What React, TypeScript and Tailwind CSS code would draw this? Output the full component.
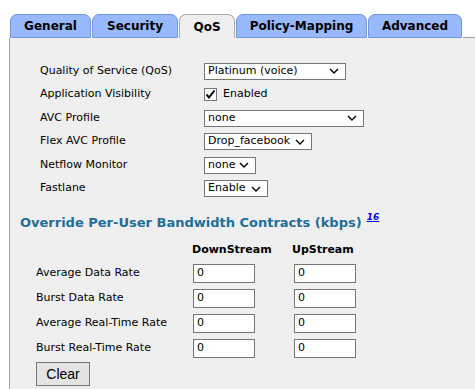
import React from 'react';

const tabs = [
    { name: 'General', w: 'w-[81px]', active: false },
    { name: 'Security', w: 'w-[86px]', active: false },
    { name: 'QoS', w: 'w-[56px]', active: true },
    { name: 'Policy-Mapping', w: 'w-[131px]', active: false },
    { name: 'Advanced', w: 'w-[94px]', active: false },
];

const Chevron = () => (
    <svg className="absolute right-[6px] top-1/2 -translate-y-1/2" width="10" height="6" viewBox="0 0 10 6">
        <path d="M1 1 L5 5 L9 1" fill="none" stroke="#000" strokeWidth="1.4" />
    </svg>
);

const Select: React.FC<{ value: string; w: string }> = ({ value, w }) => (
    <div className={`relative flex items-center h-[17px] bg-white border border-[#767676] pl-[3px] text-black ${w}`}>
        <span>{value}</span>
        <Chevron />
    </div>
);

const Field: React.FC = () => (
    <div className="flex items-center h-[19px] w-[62px] bg-white border border-[#767676] pl-[3px] text-black">0</div>
);

const rows: { label: string; h: string; control: React.ReactNode }[] = [
    { label: 'Quality of Service (QoS)', h: 'h-[24px]', control: <Select value="Platinum (voice)" w="w-[142px]" /> },
    {
        label: 'Application Visibility', h: 'h-[23px]', control: (
            <div className="flex items-center gap-[6px]">
                <svg width="13" height="13" viewBox="0 0 13 13">
                    <rect x="0.5" y="0.5" width="12" height="12" fill="#fff" stroke="#767676" />
                    <path d="M2.5 6.5 L5 9.5 L10.5 2.5" fill="none" stroke="#000" strokeWidth="2" />
                </svg>
                <span>Enabled</span>
            </div>
        )
    },
    { label: 'AVC Profile', h: 'h-[24px]', control: <Select value="none" w="w-[160px]" /> },
    { label: 'Flex AVC Profile', h: 'h-[23px]', control: <Select value="Drop_facebook" w="w-[108px]" /> },
    { label: 'Netflow Monitor', h: 'h-[24px]', control: <Select value="none" w="w-[52px]" /> },
    { label: 'Fastlane', h: 'h-[23px]', control: <Select value="Enable" w="w-[64px]" /> },
];

const rates = ['Average Data Rate', 'Burst Data Rate', 'Average Real-Time Rate', 'Burst Real-Time Rate'];

const App: React.FC = () => {
    return (
        <div className="min-h-screen flex flex-col bg-white pt-[14px] font-['DejaVu_Sans',Verdana,sans-serif] text-[11px] text-black">
            {/* Tabs */}
            <div className="flex items-end h-[24px] pl-[10px]">
                {tabs.map((t) => (
                    <div
                        key={t.name}
                        className={`${t.w} h-[24px] mr-[1px] flex items-center justify-center rounded-t-[7px] font-bold text-[12px] ${t.active ? 'bg-[#efefef] border border-b-0 border-[#a8a8a8]' : 'bg-[#98b9fb] border border-[#7198de]'}`}
                    >
                        {t.name}
                    </div>
                ))}
                <div className="flex-1 h-full border-b border-[#a0a0a0]" />
            </div>

            {/* Panel */}
            <div className="flex-1 ml-[9px] border-l border-[#a0a0a0] bg-[#efefef] pt-[21px]">
                <div className="pl-[30px]">
                    {rows.map((r) => (
                        <div key={r.label} className={`flex items-center ${r.h}`}>
                            <div className="w-[164px] shrink-0">{r.label}</div>
                            {r.control}
                        </div>
                    ))}
                </div>

                <div className="pl-[10px] mt-[15px] h-[16px] flex items-center">
                    <span className="font-bold text-[13px] text-[#1f6e96]">Override Per-User Bandwidth Contracts (kbps)</span>
                    <a href="#" className="ml-[5px] -mt-[10px] text-[9px] font-bold italic text-[#0000ee] underline">16</a>
                </div>

                <div className="pl-[26px] mt-[11px]">
                    <div className="flex items-center h-[16px] font-bold">
                        <div className="w-[156px] shrink-0" />
                        <div className="w-[100px] shrink-0">DownStream</div>
                        <div>UpStream</div>
                    </div>
                    <div className="flex flex-col gap-[6px] mt-[6px]">
                        {rates.map((r) => (
                            <div key={r} className="flex items-center h-[19px]">
                                <div className="w-[157px] shrink-0">{r}</div>
                                <div className="w-[101px] shrink-0"><Field /></div>
                                <Field />
                            </div>
                        ))}
                    </div>
                    <button className="mt-[4px] w-[54px] h-[24px] bg-[#e4e4e4] border border-[#767676] font-['Liberation_Sans',Arial,sans-serif] text-[14px] text-black">
                        Clear
                    </button>
                </div>
            </div>
        </div>
    );
};

export default App;
